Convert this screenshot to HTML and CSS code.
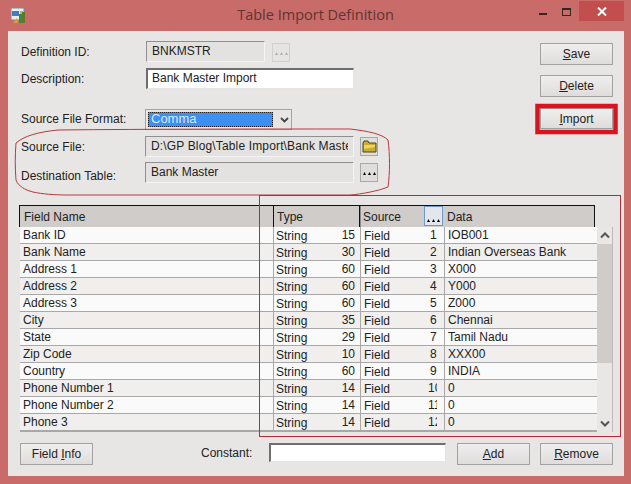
FILE: index.html
```html
<!DOCTYPE html>
<html lang="en">
<head>
    <meta charset="UTF-8">
    <title>Table Import Definition</title>
    <link rel="stylesheet" href="styles.css">
</head>
<body>
    <svg class="defs" width="0" height="0">
        <symbol id="dots" viewBox="0 0 13 4">
            <path d="M0 4 L1.5 1 L3 4 Z M5 4 L6.5 1 L8 4 Z M10 4 L11.5 1 L13 4 Z"/>
        </symbol>
    </svg>
    <div class="window">
        <div class="titlebar">
            <div class="app-icon">
                <svg width="15" height="15" viewBox="0 0 15 15">
                    <rect x="0" y="0" width="13" height="12" fill="#e8eef4" stroke="#7a8a96" stroke-width="1"/>
                    <rect x="1" y="3" width="7" height="5" fill="#3f7fc4"/>
                    <rect x="9" y="3" width="3" height="5" fill="#c7b23c"/>
                    <path d="M2 15 L6 10 L7 15 Z" fill="#e0a020"/>
                    <rect x="8" y="6" width="3" height="9" fill="#3e8a3c"/>
                    <rect x="11" y="4" width="3" height="11" fill="#5a7a30"/>
                </svg>
            </div>
            <div class="title">Table Import Definition</div>
            <div class="controls">
                <span class="ctl-min"></span>
                <span class="ctl-max"></span>
                <span class="ctl-close">
                    <svg width="10" height="9" viewBox="0 0 10 9"><path d="M1 0.5 L9 8.5 M9 0.5 L1 8.5" stroke="#fff" stroke-width="2"/></svg>
                </span>
            </div>
        </div>

        <div class="client">
            <div class="top">
                <div class="form">
                    <div class="row">
                        <label>Definition ID:</label>
                        <div class="field id-field"><span>BNKMSTR</span></div>
                        <button class="tool tool-off" type="button"><svg width="13" height="4"><use href="#dots"/></svg></button>
                    </div>
                    <div class="row">
                        <label>Description:</label>
                        <div class="field input desc-field"><span>Bank Master Import</span></div>
                    </div>
                    <div class="row row-format">
                        <label>Source File Format:</label>
                        <div class="combo">
                            <div class="combo-value">Comma</div>
                            <svg width="9" height="6" viewBox="0 0 9 6"><path d="M1 1 L4.5 4.5 L8 1" fill="none" stroke="#444" stroke-width="1.8"/></svg>
                        </div>
                    </div>
                    <div class="row row-source">
                        <label>Source File:</label>
                        <div class="field path-field"><span class="path-text">D:\GP Blog\Table Import\Bank Master</span></div>
                        <button class="tool" type="button">
                            <svg width="15" height="13" viewBox="0 0 15 13">
                                <path d="M1 12 V3 L2 1 H6 L7 3 H14 V12 Z" fill="#c9ad2c" stroke="#4a4420" stroke-width="1"/>
                                <path d="M2 5 H13 V7 L2 9 Z" fill="#e8d860"/>
                            </svg>
                        </button>
                    </div>
                    <div class="row row-dest">
                        <label>Destination Table:</label>
                        <div class="field path-field"><span>Bank Master</span></div>
                        <button class="tool" type="button"><svg width="13" height="4"><use href="#dots"/></svg></button>
                    </div>
                </div>
                <div class="actions">
                    <button class="btn" type="button"><u>S</u>ave</button>
                    <button class="btn" type="button"><u>D</u>elete</button>
                    <button class="btn" type="button"><u>I</u>mport</button>
                </div>
            </div>

            <div class="grid">
                <div class="grid-head">
                    <div class="h-name">Field Name</div>
                    <div class="h-type">Type</div>
                    <div class="h-source">Source
                        <span class="h-pick"><svg width="13" height="4"><use href="#dots"/></svg></span>
                    </div>
                    <div class="h-data">Data</div>
                </div>
                <div class="grid-body">
                    <div class="rows">
                        <div class="gr"><div class="c-name">Bank ID</div><div class="c-type"><span>String</span><span>15</span></div><div class="c-source"><span>Field</span><span class="num">1</span></div><div class="c-data">IOB001</div></div>
                        <div class="gr"><div class="c-name">Bank Name</div><div class="c-type"><span>String</span><span>30</span></div><div class="c-source"><span>Field</span><span class="num">2</span></div><div class="c-data">Indian Overseas Bank</div></div>
                        <div class="gr"><div class="c-name">Address 1</div><div class="c-type"><span>String</span><span>60</span></div><div class="c-source"><span>Field</span><span class="num">3</span></div><div class="c-data">X000</div></div>
                        <div class="gr"><div class="c-name">Address 2</div><div class="c-type"><span>String</span><span>60</span></div><div class="c-source"><span>Field</span><span class="num">4</span></div><div class="c-data">Y000</div></div>
                        <div class="gr"><div class="c-name">Address 3</div><div class="c-type"><span>String</span><span>60</span></div><div class="c-source"><span>Field</span><span class="num">5</span></div><div class="c-data">Z000</div></div>
                        <div class="gr"><div class="c-name">City</div><div class="c-type"><span>String</span><span>35</span></div><div class="c-source"><span>Field</span><span class="num">6</span></div><div class="c-data">Chennai</div></div>
                        <div class="gr"><div class="c-name">State</div><div class="c-type"><span>String</span><span>29</span></div><div class="c-source"><span>Field</span><span class="num">7</span></div><div class="c-data">Tamil Nadu</div></div>
                        <div class="gr"><div class="c-name">Zip Code</div><div class="c-type"><span>String</span><span>10</span></div><div class="c-source"><span>Field</span><span class="num">8</span></div><div class="c-data">XXX00</div></div>
                        <div class="gr"><div class="c-name">Country</div><div class="c-type"><span>String</span><span>60</span></div><div class="c-source"><span>Field</span><span class="num">9</span></div><div class="c-data">INDIA</div></div>
                        <div class="gr"><div class="c-name">Phone Number 1</div><div class="c-type"><span>String</span><span>14</span></div><div class="c-source"><span>Field</span><span class="num wide">10</span></div><div class="c-data">0</div></div>
                        <div class="gr"><div class="c-name">Phone Number 2</div><div class="c-type"><span>String</span><span>14</span></div><div class="c-source"><span>Field</span><span class="num wide">11</span></div><div class="c-data">0</div></div>
                        <div class="gr"><div class="c-name">Phone 3</div><div class="c-type"><span>String</span><span>14</span></div><div class="c-source"><span>Field</span><span class="num wide">12</span></div><div class="c-data">0</div></div>
                    </div>
                    <div class="scrollbar">
                        <div class="arrow">
                            <svg width="10" height="7" viewBox="0 0 10 7"><path d="M1 5.5 L5 1.5 L9 5.5" fill="none" stroke="#555" stroke-width="2"/></svg>
                        </div>
                        <div class="thumb"></div>
                        <div class="gap"></div>
                        <div class="arrow">
                            <svg width="10" height="7" viewBox="0 0 10 7"><path d="M1 1.5 L5 5.5 L9 1.5" fill="none" stroke="#555" stroke-width="2"/></svg>
                        </div>
                    </div>
                </div>
            </div>

            <div class="bottom">
                <button class="btn" type="button">Field <u>I</u>nfo</button>
                <label class="const-label">Constant:</label>
                <div class="field input const-field"></div>
                <button class="btn" type="button"><u>A</u>dd</button>
                <button class="btn" type="button"><u>R</u>emove</button>
            </div>
        </div>

        <!-- red marks drawn on top of the screenshot -->
        <svg class="marks" width="631" height="484" viewBox="0 0 631 484">
            <path d="M58 130 C150 129 260 129 350 129 C368 131 382 134 388 140 C390 155 390 172 388 187 C378 191 362 194 350 195 L67 195 C55 195 42 194 33 192 C25 190 18 186 16 180 C15 168 15 155 16 143 C24 136 38 132 58 130 Z" fill="none" stroke="#b8383e" stroke-width="1"/>
            <rect x="259.5" y="195.5" width="361" height="241" fill="none" stroke="#b02f36" stroke-width="1"/>
            <rect x="537.5" y="106" width="78" height="26" fill="none" stroke="#d9141e" stroke-width="4.5"/>
        </svg>
    </div>
</body>
</html>
```

FILE: styles.css
```css
body {
    margin: 0;
    font-family: "Liberation Sans", Arial, sans-serif;
    font-size: 12px;
    color: #222;
}
.defs {
    display: block;
    position: absolute;
}
.window {
    position: relative;
    width: 631px;
    height: 484px;
    background-color: #c96b68;
    overflow: hidden;
}
.marks {
    position: absolute;
    left: 0;
    top: 0;
    pointer-events: none;
}

/* title bar */
.titlebar {
    display: grid;
    grid-template-columns: 1fr auto 1fr;
    height: 31px;
}
.app-icon {
    padding: 8px 0 0 11px;
}
.title {
    font-family: "Open Sans", sans-serif;
    font-size: 14.5px;
    line-height: 30px;
    color: #5c3634;
}
.controls {
    display: flex;
    justify-content: flex-end;
    align-items: flex-start;
    padding-right: 7px;
}
.ctl-min {
    width: 8px;
    height: 2px;
    margin: 13px 15px 0 0;
    background-color: #3a2422;
}
.ctl-max {
    width: 7px;
    height: 5px;
    margin: 8px 8px 0 0;
    border: 1px solid #3a2422;
    border-top-width: 2px;
}
.ctl-close {
    display: flex;
    align-items: center;
    justify-content: center;
    width: 45px;
    height: 20px;
    margin-top: 1px;
    background-color: #c24f4e;
}

/* main area */
.client {
    height: 445px;
    margin: 0 7px 0 8px;
    padding: 10px 11px 0 11px;
    box-sizing: border-box;
    background-color: #e8e6e5;
}
.top {
    display: flex;
    justify-content: space-between;
}
.form {
    display: flex;
    flex-direction: column;
    gap: 6px;
    padding-left: 2px;
}
.row {
    display: flex;
    align-items: flex-start;
    height: 21px;
}
.row label {
    width: 125px;
    line-height: 22px;
}
.row-format {
    margin-top: 14px;
}
.row-format label {
    line-height: 21px;
}
.row-source .field,
.row-dest .field,
.row-format .combo {
    margin-left: -1px;
}
.row-source {
    margin-bottom: -1px;
}
.row-dest label {
    line-height: 28px;
}
.field {
    box-sizing: border-box;
    height: 21px;
    padding: 0 5px;
    line-height: 18px;
    background-color: #e4e2e1;
    border: 1px solid;
    border-color: #8f8f8f #f4f4f4 #f4f4f4 #8f8f8f;
}
.field span {
    display: block;
    overflow: hidden;
    white-space: nowrap;
}
.path-text {
    letter-spacing: 0.15px;
}
.input {
    background-color: #fff;
    border-width: 2px 1px 1px 2px;
    border-color: #6e6e6e #e4e4e4 #e4e4e4 #6e6e6e;
    padding-left: 4px;
    line-height: 16px;
}
.id-field {
    width: 119px;
}
.desc-field {
    width: 208px;
}
.path-field {
    width: 209px;
}
.tool {
    display: flex;
    align-items: center;
    justify-content: center;
    box-sizing: border-box;
    width: 18px;
    height: 19px;
    margin: 1px 0 0 6px;
    padding: 0;
    background-color: #e0dedd;
    border: 1px solid #a8a8a8;
}
.tool-off {
    margin-top: 2px;
    margin-left: 7px;
    background-color: #e6e4e3;
    border-color: #d2d0cf;
    fill: #b0aeae;
}
.combo {
    display: flex;
    align-items: center;
    box-sizing: border-box;
    width: 147px;
    height: 21px;
    padding-left: 2px;
    background-color: #e8e6e5;
    border: 1px solid #a4a4a4;
}
.combo-value {
    box-sizing: border-box;
    width: 125px;
    height: 15px;
    margin-right: 7px;
    padding-left: 2px;
    line-height: 11px;
    font-size: 13px;
    color: #d8e8fa;
    background-color: #3e8ff2;
    border: 1px dotted #222;
}
.actions {
    display: flex;
    flex-direction: column;
    gap: 10px;
    padding-top: 2px;
}
.btn {
    box-sizing: border-box;
    width: 73px;
    height: 22px;
    padding: 0;
    font-family: inherit;
    font-size: 12px;
    color: #222;
    background: linear-gradient(#efeeee, #dfdddc);
    border: 1px solid #a2a2a2;
}
.actions .btn:last-child {
    height: 21px;
    margin-top: 1px;
}

/* table */
.grid {
    margin-top: 22px;
}
.grid-head {
    display: grid;
    grid-template-columns: 253px 87px 85px 149px;
    width: 576px;
    height: 22px;
    box-sizing: border-box;
    line-height: 23px;
    background-color: #cfccca;
    border-top: 1px solid #111;
    border-right: 1px solid #111;
    border-left: 1px solid #111;
}
.grid-head > div {
    box-sizing: border-box;
    white-space: nowrap;
}
.h-name {
    padding-left: 4px;
}
.h-type {
    padding-left: 3px;
    border-left: 1px solid #111;
    border-right: 1px solid #111;
}
.h-source {
    display: flex;
    justify-content: space-between;
    padding: 0 2px 0 2px;
    border-left: 1px solid #8a8a8a;
}
.h-pick {
    display: flex;
    align-items: flex-end;
    justify-content: center;
    box-sizing: border-box;
    width: 19px;
    height: 20px;
    padding-bottom: 3px;
    background-color: #e3e6ea;
    border: 1px solid #6c9bd2;
}
.h-data {
    padding-left: 2px;
}
.grid-body {
    display: flex;
    height: 205px;
}
.rows {
    width: 577px;
    margin-left: 1px;
    border-bottom: 1px solid #a8a8a8;
}
.gr {
    display: grid;
    grid-template-columns: 253px 87px 85px 152px;
    box-sizing: border-box;
    height: 17px;
    border-bottom: 1px solid #a8a8a8;
    background-color: #fafafa;
}
.gr:nth-child(even) {
    background-color: #f0efee;
}
.gr > div {
    box-sizing: border-box;
    white-space: nowrap;
}
.c-name {
    padding-left: 3px;
    line-height: 16px;
}
.c-type {
    display: flex;
    justify-content: space-between;
    padding: 0 5px 0 2px;
    line-height: 18px;
    border-left: 1px solid #a8a8a8;
}
.c-type span:last-child {
    line-height: 16px;
}
.c-source {
    display: flex;
    padding-left: 3px;
    line-height: 18px;
    border-left: 1px solid #a8a8a8;
    border-right: 1px solid #a8a8a8;
}
.num {
    width: 7px;
    margin-left: 40px;
    overflow: hidden;
    line-height: 16px;
}
.num.wide {
    width: 9px;
    margin-left: 38px;
}
.c-data {
    padding-left: 3px;
    line-height: 16px;
}
.scrollbar {
    display: flex;
    flex-direction: column;
    box-sizing: border-box;
    width: 16px;
    height: 205px;
    background-color: #e9e7e6;
    border-right: 1px solid #bbb;
}
.arrow {
    display: flex;
    align-items: center;
    justify-content: center;
    height: 17px;
}
.thumb {
    height: 119px;
    background-color: #cfccca;
}
.gap {
    flex: 1;
}
.bottom {
    display: flex;
    align-items: flex-start;
    margin-top: 11px;
    margin-left: 1px;
}
.const-label {
    margin-left: 108px;
    width: 68px;
    line-height: 20px;
}
.const-field {
    width: 177px;
    height: 19px;
    margin-right: 11px;
}
.bottom .btn:last-child {
    margin-left: 10px;
}
```
